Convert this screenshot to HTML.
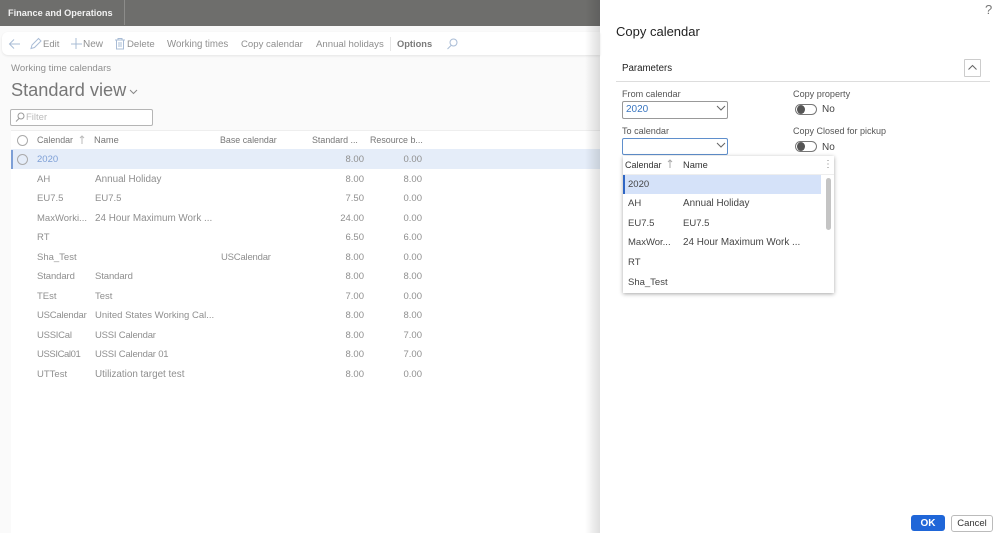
<!DOCTYPE html>
<html><head><meta charset="utf-8"><style>
html,body{margin:0;padding:0;width:1000px;height:533px;overflow:hidden;background:#fff}
body{position:relative;font-family:"Liberation Sans",sans-serif;font-size:9.5px;color:#8f8f8f}
.a{position:absolute;white-space:nowrap;line-height:14px}
.b{position:absolute}
.d{color:#333}
.r{text-align:right;width:40px}
.h{font-size:8.9px;color:#777}
.l{font-size:9.1px;color:#555}
.w{font-size:9.9px}
.m{color:#444}
</style></head><body>
<div class="b" style="left:0;top:0;width:600px;height:533px;background:#fafafa"></div>
<div class="b" style="left:0;top:0;width:600px;height:26px;background:#6e6e6c"></div>
<div class="b" style="left:124px;top:0;width:1px;height:25px;background:#8c8c8a"></div>
<div class="a" style="left:8px;top:6px;color:#f2f2f2;font-weight:bold;font-size:9.2px">Finance and Operations</div>

<div class="b" style="left:2px;top:32px;width:598px;height:23px;background:#fff;border-radius:6px 0 0 6px;box-shadow:0 1px 2px #e4e4e4"></div>
<svg class="b" style="left:0;top:30px" width="480" height="28" fill="none" stroke="#a9bcd6" stroke-width="1">
<path d="M20 14H10M14 9.500L9.500 14L14 18.500"/>
<path d="M31 18.500L32 15L38.500 8.500L41 11L34.500 17.500Z"/>
<path d="M76 8V19M71 14H82" stroke-width="1"/>
<path d="M115 10H125M118 10V8.500H122V10M116.500 10V19H123.500V10M119 12V17M121 12V17"/>
<circle cx="453.500" cy="12.500" r="3.500"/><path d="M451 15.500L447.500 19"/>
</svg>
<div class="a" style="left:43px;top:38px">Edit</div>
<div class="a" style="left:83px;top:38px;font-size:10px">New</div>
<div class="a" style="left:127px;top:38px;font-size:9.6px">Delete</div>
<div class="a" style="left:167px;top:38px;font-size:9.7px">Working times</div>
<div class="a" style="left:241px;top:38px;font-size:9.6px">Copy calendar</div>
<div class="a" style="left:316px;top:38px;font-size:9.6px">Annual holidays</div>
<div class="b" style="left:390px;top:37px;width:1px;height:14px;background:#e6e6e6"></div>
<div class="a" style="left:397px;top:37px;font-weight:bold;color:#7a7a7a;font-size:9.3px">Options</div>

<div class="a" style="left:11px;top:62px;font-size:9.6px">Working time calendars</div>
<div class="a" style="left:11px;top:79px;font-size:18.2px;line-height:22px;color:#777">Standard view</div>
<svg class="b" style="left:128px;top:88px" width="12" height="8" fill="none" stroke="#888"><path d="M2 2L5.500 5.500L9 2"/></svg>
<div class="b" style="left:10px;top:109px;width:141px;height:15px;border:1px solid #b5b5b5;border-radius:2px;background:#fff"></div>
<svg class="b" style="left:14px;top:111px" width="12" height="12" fill="none" stroke="#999"><circle cx="7" cy="5" r="3"/><path d="M5 7.500L2 10.500"/></svg>
<div class="a" style="left:26px;top:111px;color:#bbb">Filter</div>

<div class="b" style="left:11px;top:130px;width:589px;height:403px;background:#fff"></div>
<div class="b" style="left:11px;top:130px;width:589px;height:1px;background:#eee"></div>
<div class="b" style="left:11px;top:149px;width:589px;height:20px;background:#e5edf9"></div>
<div class="b" style="left:11px;top:150px;width:2px;height:19px;background:#7d9fd6"></div>
<div class="b" style="left:17px;top:135px;width:9px;height:9px;border:1px solid #aaa;border-radius:50%"></div>
<div class="b" style="left:17px;top:154px;width:9px;height:9px;border:1px solid #aaa;border-radius:50%"></div>

<div class="a h" style="left:37px;top:133px">Calendar</div>
<svg class="b" style="left:78px;top:134px" width="8" height="11" fill="none" stroke="#bbb"><path d="M4 10V2M2 4L4 2L6 4"/></svg>
<div class="a h" style="left:94px;top:133px;font-size:9.3px">Name</div>
<div class="a h" style="left:220px;top:133px">Base calendar</div>
<div class="a h" style="left:312px;top:133px">Standard ...</div>
<div class="a h" style="left:370px;top:133px">Resource b...</div>

<div class="a" style="left:37px;top:153px;color:#7d9fd6">2020</div><div class="a r" style="left:324px;top:153px">8.00</div><div class="a r" style="left:382px;top:153px">0.00</div>
<div class="a" style="left:37px;top:173px">AH</div><div class="a w" style="left:95px;top:173px">Annual Holiday</div><div class="a r" style="left:324px;top:173px">8.00</div><div class="a r" style="left:382px;top:173px">8.00</div>
<div class="a" style="left:37px;top:192px">EU7.5</div><div class="a" style="left:95px;top:192px">EU7.5</div><div class="a r" style="left:324px;top:192px">7.50</div><div class="a r" style="left:382px;top:192px">0.00</div>
<div class="a" style="left:37px;top:212px">MaxWorki...</div><div class="a w" style="left:95px;top:212px">24 Hour Maximum Work ...</div><div class="a r" style="left:324px;top:212px">24.00</div><div class="a r" style="left:382px;top:212px">0.00</div>
<div class="a" style="left:37px;top:231px">RT</div><div class="a r" style="left:324px;top:231px">6.50</div><div class="a r" style="left:382px;top:231px">6.00</div>
<div class="a" style="left:37px;top:251px">Sha_Test</div><div class="a" style="left:221px;top:251px;letter-spacing:-.2px">USCalendar</div><div class="a r" style="left:324px;top:251px">8.00</div><div class="a r" style="left:382px;top:251px">0.00</div>
<div class="a" style="left:37px;top:270px;letter-spacing:-.1px">Standard</div><div class="a" style="left:95px;top:270px;letter-spacing:-.1px">Standard</div><div class="a r" style="left:324px;top:270px">8.00</div><div class="a r" style="left:382px;top:270px">8.00</div>
<div class="a" style="left:37px;top:290px">TEst</div><div class="a" style="left:95px;top:290px">Test</div><div class="a r" style="left:324px;top:290px">7.00</div><div class="a r" style="left:382px;top:290px">0.00</div>
<div class="a" style="left:37px;top:309px;letter-spacing:-.22px">USCalendar</div><div class="a" style="left:95px;top:309px">United States Working Cal...</div><div class="a r" style="left:324px;top:309px">8.00</div><div class="a r" style="left:382px;top:309px">8.00</div>
<div class="a" style="left:37px;top:329px;letter-spacing:-.25px">USSICal</div><div class="a" style="left:95px;top:329px;letter-spacing:-.2px">USSI Calendar</div><div class="a r" style="left:324px;top:329px">8.00</div><div class="a r" style="left:382px;top:329px">7.00</div>
<div class="a" style="left:37px;top:348px;letter-spacing:-.4px">USSICal01</div><div class="a" style="left:95px;top:348px;letter-spacing:-.2px">USSI Calendar 01</div><div class="a r" style="left:324px;top:348px">8.00</div><div class="a r" style="left:382px;top:348px">7.00</div>
<div class="a" style="left:37px;top:368px">UTTest</div><div class="a w" style="left:95px;top:368px">Utilization target test</div><div class="a r" style="left:324px;top:368px">8.00</div><div class="a r" style="left:382px;top:368px">0.00</div>

<div class="b" style="left:585px;top:0;width:15px;height:533px;background:linear-gradient(90deg,rgba(0,0,0,0),rgba(0,0,0,.13))"></div>

<div class="a d" style="left:985px;top:3px;font-size:13px;color:#777">?</div>
<div class="a" style="left:616px;top:23px;font-size:13px;line-height:18px;color:#222">Copy calendar</div>
<div class="a d" style="left:622px;top:62px;font-size:9.7px;color:#222">Parameters</div>
<div class="b" style="left:616px;top:81px;width:374px;height:1px;background:#ddd"></div>
<div class="b" style="left:964px;top:59px;width:15px;height:16px;border:1px solid #ccc;border-radius:1px"></div>
<svg class="b" style="left:964px;top:59px" width="17" height="18" fill="none" stroke="#666"><path d="M4.500 10.500L8.500 6.500L12.500 10.500"/></svg>

<div class="a l" style="left:622px;top:87px">From calendar</div>
<div class="b" style="left:622px;top:101px;width:104px;height:16px;border:1px solid #999;border-radius:2px"></div>
<div class="a" style="left:626px;top:103px;color:#3a76c0;font-size:10px">2020</div>
<svg class="b" style="left:715px;top:104px" width="12" height="10" fill="none" stroke="#666"><path d="M2 2L6 6L10 2"/></svg>
<div class="a l" style="left:622px;top:124px">To calendar</div>
<div class="b" style="left:622px;top:138px;width:104px;height:15px;border:1px solid #5f8fcc;border-radius:2px"></div>
<svg class="b" style="left:715px;top:141px" width="12" height="10" fill="none" stroke="#666"><path d="M2 2L6 6L10 2"/></svg>

<div class="a l" style="left:793px;top:87px">Copy property</div>
<div class="b" style="left:795px;top:104px;width:20px;height:9px;border:1px solid #777;border-radius:6px"></div>
<div class="b" style="left:797px;top:105px;width:8px;height:9px;background:#555;border-radius:50%"></div>
<div class="a m" style="left:822px;top:103px;font-size:10px">No</div>
<div class="a l" style="left:793px;top:124px;font-size:9px">Copy Closed for pickup</div>
<div class="b" style="left:795px;top:141px;width:20px;height:9px;border:1px solid #777;border-radius:6px"></div>
<div class="b" style="left:797px;top:142px;width:8px;height:9px;background:#555;border-radius:50%"></div>
<div class="a m" style="left:822px;top:141px;font-size:10px">No</div>

<div class="b" style="left:623px;top:156px;width:211px;height:137px;background:#fff;box-shadow:0 1px 4px rgba(0,0,0,.35)"></div>
<div class="b" style="left:623px;top:174px;width:211px;height:1px;background:#eee"></div>
<div class="b" style="left:623px;top:175px;width:198px;height:19px;background:#d5e2f9"></div>
<div class="b" style="left:623px;top:175px;width:2px;height:19px;background:#2f66c4"></div>
<div class="b" style="left:826px;top:178px;width:5px;height:52px;background:#c4c4c4;border-radius:3px"></div>
<div class="a d" style="left:625px;top:158px;font-size:9px">Calendar</div>
<svg class="b" style="left:666px;top:158px" width="8" height="11" fill="none" stroke="#aaa"><path d="M4 10V2M2 4L4 2L6 4"/></svg>
<div class="a d" style="left:683px;top:158px;font-size:9.3px">Name</div>
<div class="a" style="left:823px;top:158px;color:#888;font-size:10px">⋮</div>
<div class="a m" style="left:628px;top:178px">2020</div>
<div class="a m" style="left:628px;top:197px">AH</div><div class="a m w" style="left:683px;top:197px">Annual Holiday</div>
<div class="a m" style="left:628px;top:217px">EU7.5</div><div class="a m" style="left:683px;top:217px">EU7.5</div>
<div class="a m" style="left:628px;top:236px">MaxWor...</div><div class="a m w" style="left:683px;top:236px">24 Hour Maximum Work ...</div>
<div class="a m" style="left:628px;top:256px">RT</div>
<div class="a m" style="left:628px;top:276px">Sha_Test</div>

<div class="b" style="left:911px;top:515px;width:34px;height:16px;background:#1f66d8;border-radius:3px"></div>
<div class="a" style="left:911px;top:517px;width:34px;text-align:center;color:#fff;font-weight:bold;font-size:10px">OK</div>
<div class="b" style="left:951px;top:515px;width:40px;height:15px;border:1px solid #bbb;border-radius:3px"></div>
<div class="a" style="left:951px;top:517px;width:42px;text-align:center;color:#333">Cancel</div>
</body></html>
